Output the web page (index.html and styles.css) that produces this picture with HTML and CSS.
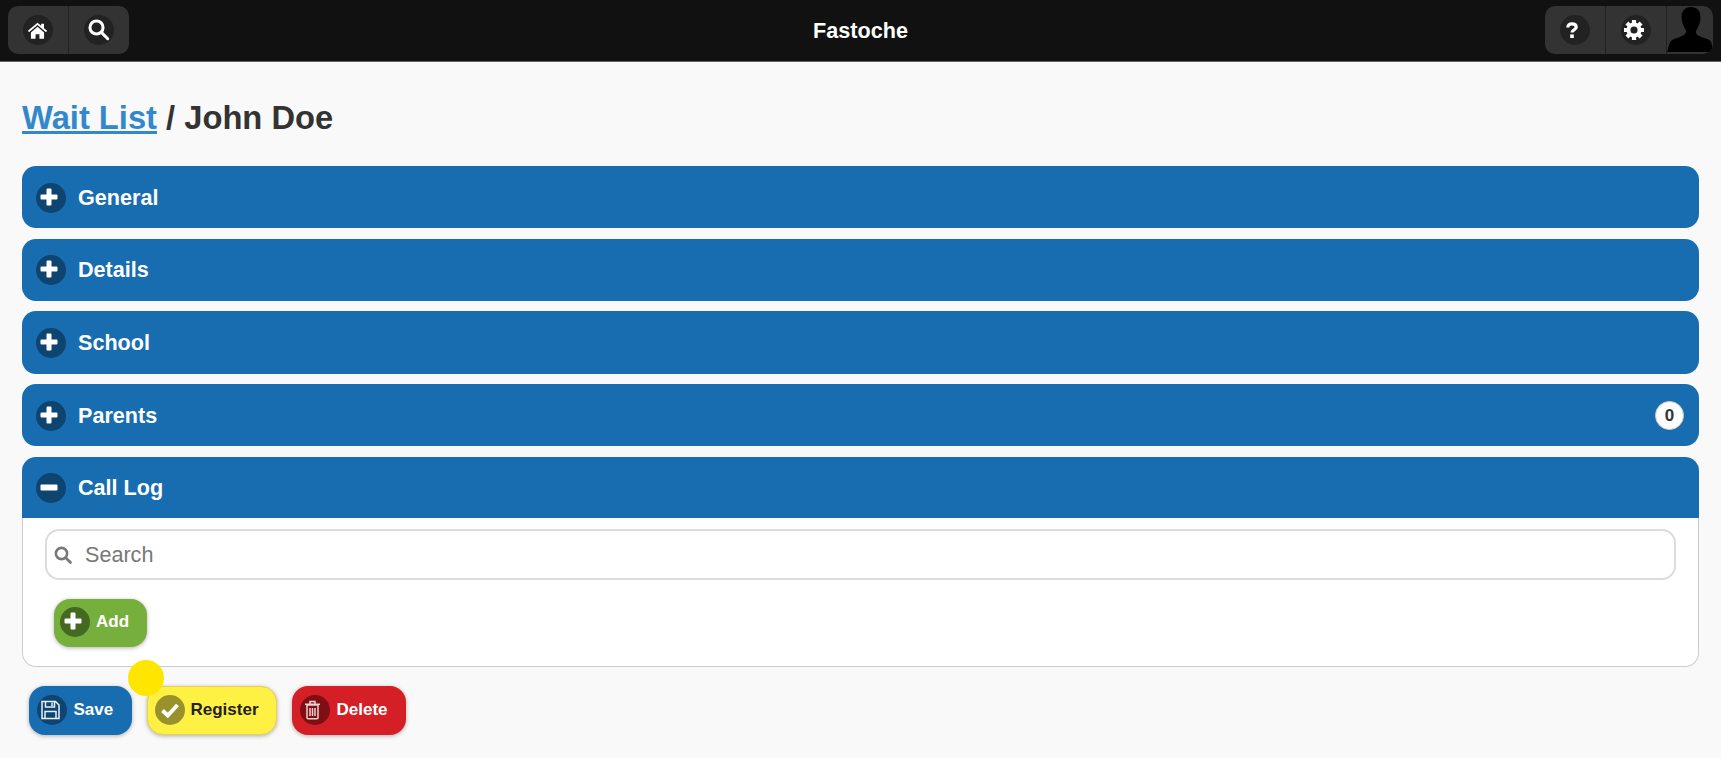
FILE: index.html
```html
<!DOCTYPE html>
<html lang="en">
<head>
<meta charset="utf-8">
<title>Fastoche</title>
<link rel="stylesheet" href="styles.css">
</head>
<body>
<header class="topbar">
  <div class="navgroup">
    <a class="navbtn"><span class="navicon"><svg viewBox="0 0 24 24" class="svg-home"><path fill="#fff" d="M12 3 1 12.400l1.300 1.600L12 5.800l9.700 8.200 1.300-1.600-3.600-3V4.200h-3.200v2.500zM12 7.800 4.500 14.200V21.500h5.300v-5.300h4.400v5.300h5.300v-7.300z"/></svg></span></a>
    <a class="navbtn"><span class="navicon"><svg viewBox="0 0 24 24" class="svg-search"><circle cx="9.500" cy="9.500" r="7.300" fill="none" stroke="#fff" stroke-width="3.400"/><path d="M15.500 15.500 22 22" stroke="#fff" stroke-width="3.400" stroke-linecap="round"/></svg></span></a>
  </div>
  <div class="brand">Fastoche</div>
  <div class="navgroup navgroup-right">
    <a class="navbtn"><span class="navicon"><svg viewBox="3 0 12 16" class="svg-q"><path d="M1.800 5.400C1.800 3 3.500 1.800 6 1.800s4.200 1.300 4.200 3.400c0 2.900-4.200 2.500-4.200 5.400" fill="none" stroke="#fff" stroke-width="3.200"/><rect x="4.200" y="12.400" width="3.600" height="3.600" fill="#fff"/></svg></span></a>
    <a class="navbtn"><span class="navicon"><svg viewBox="2.400 0 24 24" class="svg-gear"><g stroke="#fff" stroke-width="5"><path d="M12 0v24M0 12h24M3.500 3.500l17 17M20.500 3.500l-17 17"/></g><circle cx="12" cy="12" r="9" fill="#fff"/><circle cx="12" cy="12" r="4.300" fill="#222"/></svg></span></a>
    <a class="avatar"><svg viewBox="0 0 46 48" class="avatar-svg"><path fill="#000" d="M24 1c6 0 9.500 4 9.500 10.500 0 5-2 9-4 12.500-1 2-.5 4 1 5 3 2 7 3 10 4 3 1 4 3 4.500 6l.500 6.500c.500 .500 .500 .500 0 .500L0 46l2-7c1-3 2-5 5-6 4-1.500 8-2.500 10.500-4.500 1.500-1 2-3 1-5-2-3.500-4-7.500-4-12.500C14.500 5 18 1 24 1z"/></svg></a>
  </div>
</header>

<main class="page">
  <h1 class="title"><a class="title-link">Wait List</a> / John Doe</h1>

  <section class="panel"><h2 class="panel-head"><span class="ico ico-blue"><svg viewBox="2 1 20 20" class="svg-ico"><path d="M7.500 2.500a1 1 0 0 1 1-1h3a1 1 0 0 1 1 1v5h5a1 1 0 0 1 1 1v3a1 1 0 0 1-1 1h-5v5a1 1 0 0 1-1 1h-3a1 1 0 0 1-1-1v-5h-5a1 1 0 0 1-1-1v-3a1 1 0 0 1 1-1h5z" fill="#fff"/></svg></span>General</h2></section>
  <section class="panel"><h2 class="panel-head"><span class="ico ico-blue"><svg viewBox="2 1 20 20" class="svg-ico"><path d="M7.500 2.500a1 1 0 0 1 1-1h3a1 1 0 0 1 1 1v5h5a1 1 0 0 1 1 1v3a1 1 0 0 1-1 1h-5v5a1 1 0 0 1-1 1h-3a1 1 0 0 1-1-1v-5h-5a1 1 0 0 1-1-1v-3a1 1 0 0 1 1-1h5z" fill="#fff"/></svg></span>Details</h2></section>
  <section class="panel"><h2 class="panel-head"><span class="ico ico-blue"><svg viewBox="2 1 20 20" class="svg-ico"><path d="M7.500 2.500a1 1 0 0 1 1-1h3a1 1 0 0 1 1 1v5h5a1 1 0 0 1 1 1v3a1 1 0 0 1-1 1h-5v5a1 1 0 0 1-1 1h-3a1 1 0 0 1-1-1v-5h-5a1 1 0 0 1-1-1v-3a1 1 0 0 1 1-1h5z" fill="#fff"/></svg></span>School</h2></section>
  <section class="panel"><h2 class="panel-head"><span class="ico ico-blue"><svg viewBox="2 1 20 20" class="svg-ico"><path d="M7.500 2.500a1 1 0 0 1 1-1h3a1 1 0 0 1 1 1v5h5a1 1 0 0 1 1 1v3a1 1 0 0 1-1 1h-5v5a1 1 0 0 1-1 1h-3a1 1 0 0 1-1-1v-5h-5a1 1 0 0 1-1-1v-3a1 1 0 0 1 1-1h5z" fill="#fff"/></svg></span>Parents<span class="count">0</span></h2></section>
  <section class="panel panel-open">
    <h2 class="panel-head"><span class="ico ico-blue"><svg viewBox="2 1 20 20" class="svg-ico"><rect x="1.500" y="7.500" width="17" height="6" rx="1" fill="#fff"/></svg></span>Call Log</h2>
    <div class="panel-body">
      <div class="search">
        <svg viewBox="0 0 24 24" class="search-ico"><circle cx="10" cy="10" r="7.500" fill="none" stroke="#777" stroke-width="3.400"/><path d="M15.500 15.500 22 22" stroke="#777" stroke-width="3.600" stroke-linecap="round"/></svg>
        <span class="search-ph">Search</span>
      </div>
      <a class="btn btn-add"><span class="ico ico-green"><svg viewBox="2 1 20 20" class="svg-ico"><path d="M7.500 2.500a1 1 0 0 1 1-1h3a1 1 0 0 1 1 1v5h5a1 1 0 0 1 1 1v3a1 1 0 0 1-1 1h-5v5a1 1 0 0 1-1 1h-3a1 1 0 0 1-1-1v-5h-5a1 1 0 0 1-1-1v-3a1 1 0 0 1 1-1h5z" fill="#fff"/></svg></span>Add</a>
    </div>
  </section>

  <div class="actions">
    <a class="btn btn-save"><span class="ico ico-blue"><svg viewBox="1.500 0 20 20" class="svg-ico"><path fill="none" stroke="#e8f0f6" stroke-width="1.500" d="M1.500 1.500h13.500l3.500 3.500v13.500h-17zM5 1.500v5.500h9V1.500M4.500 18.500v-7h11v7"/><path stroke="#e8f0f6" stroke-width="1.500" d="M11.500 2.500v3.500"/></svg></span>Save</a>
    <a class="btn btn-register"><span class="ico ico-olive"><svg viewBox="0 0 20 20" class="svg-ico"><path d="M2.500 10.500 7.800 15.500 17.500 5" fill="none" stroke="#fff" stroke-width="4"/></svg></span>Register</a>
    <a class="btn btn-delete"><span class="ico ico-red"><svg viewBox="2.500 0 20 20" class="svg-ico"><path fill="none" stroke="#f0d0d0" stroke-width="1.500" d="M4.500 5h11v12.500a1.300 1.300 0 0 1-1.300 1.300H5.800a1.300 1.300 0 0 1-1.300-1.300zM2.500 4.300h15M7.500 4V1.500h5V4M7.500 8v8M10 8v8M12.500 8v8"/></svg></span>Delete</a>
    <span class="tap-dot"></span>
  </div>
</main>
</body>
</html>
```
FILE: styles.css
```css
* { box-sizing: border-box; }
html, body { margin: 0; height: 100%; }
body {
  background: #f9f9f9;
  color: #333;
  font-family: "Liberation Sans", Arial, sans-serif;
  overflow: hidden;
}
svg { overflow: visible; }
.topbar {
  height: 62px;
  background: #111;
  border-bottom: 1px solid #666;
  padding: 6px 8px;
  display: grid;
  grid-template-columns: 1fr auto 1fr;
  align-items: start;
}
.navgroup {
  display: flex;
  width: max-content;
  height: 48px;
  background: #333;
  border-radius: 10px;
  overflow: hidden;
}
.navgroup-right { justify-self: end; }
.navbtn {
  width: 61px;
  height: 48px;
  display: flex;
  align-items: center;
  justify-content: center;
  border-right: 1px solid #222;
  padding-right: 1px;
}
.navgroup > .navbtn:last-child { border-right: 0; width: 60px; padding-right: 0; }
.navicon {
  width: 30px;
  height: 30px;
  border-radius: 50%;
  background: #222;
  display: flex;
  align-items: center;
  justify-content: center;
}
.svg-home { width: 21px; height: 21px; }
.svg-search { width: 21.5px; height: 21.5px; }
.svg-q { width: 12px; height: 16px; }
.svg-gear { width: 20px; height: 20px; }
.svg-ico { width: 20px; height: 20px; display: block; }
.brand {
  color: #fff;
  font-size: 21.6px;
  font-weight: 700;
  line-height: 50px;
}
.avatar { width: 46px; height: 48px; display: block; }
.avatar-svg { display: block; width: 46px; height: 48px; }
.page { padding: 0 22px; position: relative; }
.title {
  margin: 0;
  padding-top: 37px;
  height: 104px;
  font-size: 32.7px;
  line-height: 37px;
  font-weight: 700;
}
.title-link { color: #3388cc; text-decoration: underline; }
.panel { margin-bottom: 10.5px; }
.panel-head {
  margin: 0;
  height: 62.2px;
  background: #186cb0;
  color: #fff;
  border-radius: 14px;
  font-size: 21.6px;
  font-weight: 700;
  display: flex;
  align-items: center;
  padding: 1px 15px 0 14px;
  gap: 12px;
}
.ico {
  width: 30px;
  height: 30px;
  border-radius: 50%;
  display: flex;
  align-items: center;
  justify-content: center;
  flex: none;
}
.ico-blue { background: #0e4470; }
.ico-green { background: #446a22; }
.ico-olive { background: #99922c; }
.ico-red { background: #7e0f14; }
.count {
  margin-left: auto;
  width: 29px;
  height: 29px;
  border-radius: 50%;
  background: #fff;
  color: #333;
  border: 1px solid #ccc;
  font-size: 17px;
  line-height: 27px;
  text-align: center;
}
.panel-open .panel-head { border-radius: 14px 14px 0 0; height: 61.5px; }
.panel-open { margin-bottom: 19px; }
.panel-body {
  height: 148.7px;
  background: #fff;
  border: 1px solid #ccc;
  border-top: 0;
  border-radius: 0 0 14px 14px;
  padding: 11px 22px 0;
}
.search {
  height: 51px;
  background: #fff;
  border: 2px solid #dcdcdc;
  border-radius: 14px;
  display: flex;
  align-items: center;
  padding-left: 7px;
  gap: 13px;
}
.search-ico { width: 18px; height: 18px; }
.search-ph { color: #777; font-size: 21.6px; }
.btn {
  display: inline-flex;
  align-items: center;
  height: 49px;
  border-radius: 16px;
  font-size: 17px;
  font-weight: 700;
  padding: 0 0 1px 8px;
  gap: 6.5px;
  box-shadow: 0 1px 4px rgba(0,0,0,.3);
}
.btn-add {
  margin: 18.5px 0 0 9px;
  background: #76af3c;
  color: #fff;
  width: 93px;
  height: 48px;
  padding-left: 5.5px;
}
.actions { display: flex; gap: 15px; padding-left: 7px; position: relative; }
.btn-save { background: #186cb0; color: #fff; width: 103px; }
.btn-register { background: #fff144; color: #222; border: 1px solid #e8cf55; width: 130px; padding-left: 6.5px; gap: 6px; }
.btn-delete { background: #d41f26; color: #fff; width: 114px; }
.tap-dot {
  position: absolute;
  left: 106px;
  top: -26px;
  width: 36px;
  height: 36px;
  border-radius: 50%;
  background: #ffe600;
}
```
